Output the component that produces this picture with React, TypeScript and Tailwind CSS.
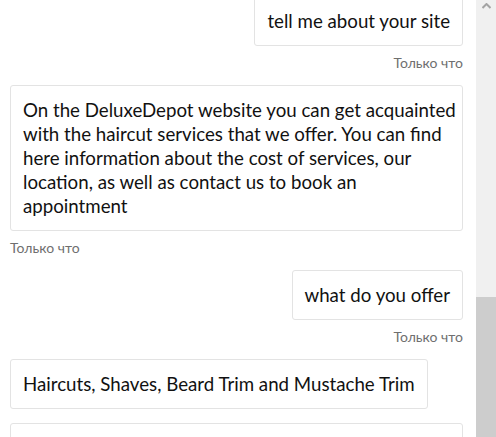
import React from 'react'

type Msg = { from: 'me' | 'bot'; lines: string[]; time?: string }

const messages: Msg[] = [
  { from: 'me', lines: ['tell me about your site'], time: 'Только что' },
  {
    from: 'bot',
    lines: [
      'On the DeluxeDepot website you can get acquainted',
      'with the haircut services that we offer. You can find',
      'here information about the cost of services, our',
      'location, as well as contact us to book an',
      'appointment',
    ],
    time: 'Только что',
  },
  { from: 'me', lines: ['what do you offer'], time: 'Только что' },
  { from: 'bot', lines: ['Haircuts, Shaves, Beard Trim and Mustache Trim'] },
  { from: 'bot', lines: ['We are located at the address indicated in the contacts'] },
]

function Bubble({ msg }: { msg: Msg }) {
  const mine = msg.from === 'me'
  return (
    <div className={mine ? 'flex flex-col items-end' : 'flex flex-col items-start'}>
      <div className="max-w-[453px] rounded-[3px] border border-[#e3e3e3] bg-white px-3 py-3 text-[18.7px] leading-[24px] text-[#111]">
        {msg.lines.map((l, i) => (
          <div key={i} className="whitespace-nowrap">
            {l}
          </div>
        ))}
      </div>
      {msg.time && (
        <span className="mt-[9px] text-[14px] leading-[16px] text-[#6f6f6f]">{msg.time}</span>
      )}
    </div>
  )
}

export default function App() {
  return (
    <div className="flex h-[437px] w-[496px] overflow-hidden bg-white font-['Lato',sans-serif]">
      <div className="flex-1 overflow-hidden pl-[10px] pr-[13px]">
        <div className="-mt-[4px] flex flex-col gap-[14px]">
          {messages.map((m, i) => (
            <Bubble key={i} msg={m} />
          ))}
        </div>
      </div>
      <div className="flex w-[20px] flex-col bg-[#f0f0f0]">
        <div className="flex h-[17px] items-start justify-center pt-[3px]">
          <svg width="9" height="6" viewBox="0 0 9 6">
            <path d="M0.5 5 L4.5 1 L8.5 5" fill="none" stroke="#a3a3a3" strokeWidth="2" />
          </svg>
        </div>
        <div className="mt-[280px] flex-1 bg-[#cdcdcd]" />
      </div>
    </div>
  )
}
